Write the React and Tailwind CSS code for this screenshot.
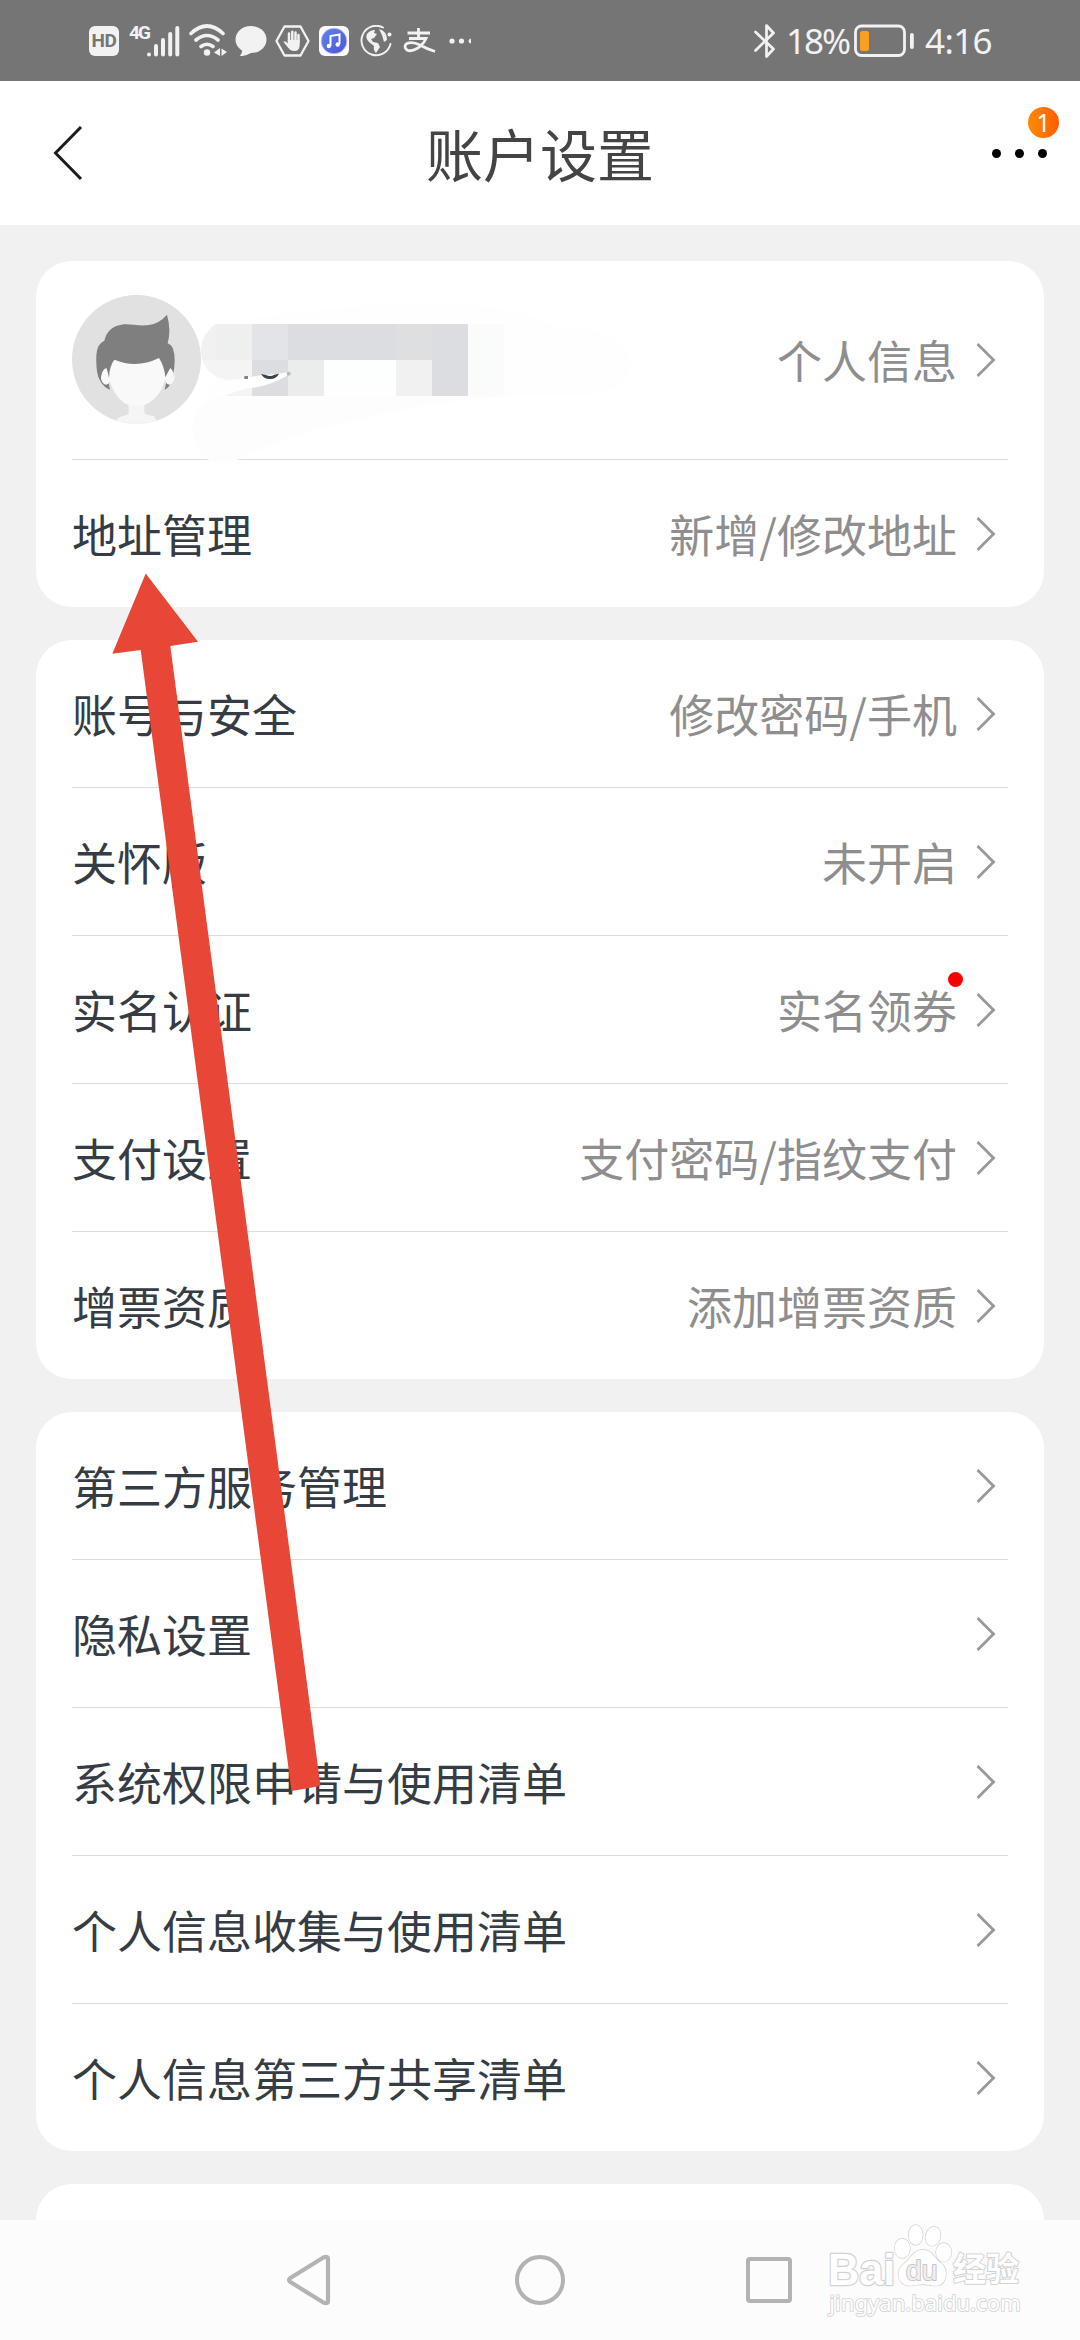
import React from "react";

const account = [
  { label: "账号与安全", value: "修改密码/手机" },
  { label: "关怀版", value: "未开启" },
  { label: "实名认证", value: "实名领券", dot: true },
  { label: "支付设置", value: "支付密码/指纹支付" },
  { label: "增票资质", value: "添加增票资质" },
];

const privacy = [
  { label: "第三方服务管理" },
  { label: "隐私设置" },
  { label: "系统权限申请与使用清单" },
  { label: "个人信息收集与使用清单" },
  { label: "个人信息第三方共享清单" },
];

function Chevron() {
  return (
    <svg className="ml-[19px] h-[36px] w-[20px] shrink-0" viewBox="0 0 20 36" fill="none">
      <path d="M1.500 2 17.500 18 1.500 34" stroke="#999" strokeWidth="2.800" />
    </svg>
  );
}

function Value({ value, dot }) {
  return (
    <div className="relative flex items-center text-[#8e8e8e]">
      <span>{value}</span>
      {dot && <i className="absolute -top-[5px] right-[33px] size-[15px] rounded-full bg-[#f90006]" />}
      <Chevron />
    </div>
  );
}

function Row({ label, value, dot }) {
  return (
    <div className="box-content flex h-[147px] items-center justify-between pr-[12px]">
      <span>{label}</span>
      <Value value={value} dot={dot} />
    </div>
  );
}

function Card({ children }) {
  return (
    <section className="mx-[36px] shrink-0 divide-y divide-[#dbdcdd] rounded-[36px] bg-white px-[36px]">
      {children}
    </section>
  );
}

function Avatar() {
  return (
    <svg className="-mt-[2px] size-[129px]" viewBox="36 45 387 387">
      <defs>
        <clipPath id="face"><circle cx="229.500" cy="238.500" r="193.500" /></clipPath>
      </defs>
      <g clipPath="url(#face)">
        <rect x="36" y="45" width="387" height="387" fill="#e2e1e2" />
        <path d="M112 270q4 45 38 60l-8-40zM342 270q0 42-28 60l8-40z" fill="#7f7f7f" />
        <path d="M206 350h47v50q8 7 30 8l12 30H165l8-24q15-6 33-11z" fill="#f5f5f5" />
        <ellipse cx="138" cy="287" rx="16" ry="27" fill="#f8f8f8" />
        <ellipse cx="328" cy="287" rx="16" ry="27" fill="#f8f8f8" />
        <path d="M160 225Q230 260 300 222L316 290Q308 345 262 371Q230 384 196 371Q158 347 147 292Z" fill="#f9f9f9" />
        <path d="M321 104Q296 133 262 136C225 138 208 130 184 134Q143 140 133 182Q112 190 109 225Q107 285 122 303Q124 268 139 264Q144 275 147 294Q148 258 163 239Q230 267 297 234Q314 260 316 292Q324 276 331 264Q344 276 338 292Q350 235 338 203Q333 194 323 190Q334 150 321 104Z" fill="#7f7f7f" />
      </g>
    </svg>
  );
}

/* Mosaic strokes that conceal the account name */
function NameMask() {
  return (
    <svg className="absolute left-[118px] top-[34px] h-[170px] w-[450px]" viewBox="390 45 1350 510">
      <defs>
        <clipPath id="brush">
          <path d="M468 132H1332V348H494Q540 325 590 322Q650 310 690 280Q610 285 560 293Q520 300 500 299Q445 290 426 240Q412 170 468 132Z" />
        </clipPath>
      </defs>
      <path d="M468 348Q390 380 398 460Q415 550 490 549Q530 548 590 512Q740 445 900 420Q1120 360 1332 352L1332 132H468Z" fill="#fdfdfd" />
      <path d="M468 132Q900 60 1200 76Q1380 80 1480 140Q1650 140 1705 220Q1730 320 1600 345Q1480 340 1332 350Z" fill="#fefefe" />
      <g clipPath="url(#brush)">
        <rect x="400" y="132" width="68" height="108" fill="#f1f1f1" />
        <rect x="468" y="132" width="108" height="108" fill="#eef0ef" />
        <rect x="400" y="240" width="176" height="108" fill="#f4f4f4" />
        <rect x="576" y="132" width="108" height="108" fill="#e3e4e7" />
        <rect x="576" y="240" width="108" height="108" fill="#dcdde0" />
        <rect x="684" y="132" width="324" height="108" fill="#dcdde0" />
        <rect x="1008" y="132" width="108" height="108" fill="#dedfe1" />
        <rect x="684" y="240" width="108" height="108" fill="#ebedec" />
        <rect x="792" y="240" width="216" height="108" fill="#fdfefe" />
        <rect x="1008" y="240" width="108" height="108" fill="#f1f1f2" />
        <rect x="1116" y="132" width="108" height="216" fill="#dcdde0" />
        <rect x="1224" y="132" width="108" height="216" fill="#fafbfb" />
      </g>
      <path d="M500 303Q560 293 605 286Q650 284 682 277Q692 280 670 293Q620 312 560 325Q515 338 492 349L430 348Q425 320 500 303Z" fill="#fefefe" />
      <path d="M603 282Q612 298 631 297Q650 296 657 281L643 284Q632 292 617 285Z" fill="#3a434b" />
      <rect x="553" y="288" width="11" height="9" fill="#7f8386" />
      <circle cx="686" cy="281" r="6" fill="#b9babc" />
    </svg>
  );
}

function StatusBar() {
  return (
    <div className="flex h-[81px] shrink-0 items-center bg-[#757575] pl-[89px] pr-[90px] text-[#f2f2f2]">
      <div className="flex size-[30px] items-center justify-center rounded-[6px] bg-[#f2f2f2] font-[Roboto] text-[19px] leading-none font-bold tracking-[-0.5px] text-[#757575]">HD</div>
      <span className="mb-[17px] ml-[10px] w-[18px] font-[Roboto] text-[19px] leading-none font-bold tracking-[-2px]">4G</span>
      <svg className="h-[32px] w-[34px]" viewBox="0 0 34 32" stroke="#f2f2f2" strokeWidth="4" strokeLinecap="round">
        <path d="M2 29.500V29.600M9 21V29.600M16 15V29.600M23.200 9V29.600M30.300 3V29.600" />
      </svg>
      <svg className="ml-[8px] h-[33px] w-[38px]" viewBox="0 0 38 33" fill="none" stroke="#f2f2f2" strokeWidth="3.600" strokeLinecap="round">
        <path d="M2 9.500Q18 -5.500 34 9.500M7 16Q18 7 29 16M12 22.500Q18 18 24 22.500" />
        <circle cx="18" cy="28.500" r="3.200" fill="#f2f2f2" stroke="none" />
        <path d="M31 24V32L25 28.500ZM32.500 24.500 38 28 32.500 32Z" fill="#f2f2f2" stroke="none" />
      </svg>
      <svg className="ml-[8px] h-[30px] w-[32px]" viewBox="0 0 32 30" fill="#f2f2f2">
        <path d="M16 0C25 0 31.500 6 31.500 13.500S25 27 16 27C12 29 8 30.500 5 30Q7.500 27 7 24.500C3 22 .5 18 .5 13.500C.5 6 7 0 16 0Z" />
      </svg>
      <svg className="ml-[8px] h-[32px] w-[35px]" viewBox="0 0 35 32" fill="none" stroke="#f2f2f2">
        <path d="M9.500 1.500H25.500L33.500 16 25.500 30.500H9.500L1.500 16Z" strokeWidth="2.300" strokeLinejoin="round" />
        <path d="M14 17V8.500M17.300 16V6.800M20.500 16V7.500M23.500 17V10" strokeWidth="2.500" strokeLinecap="round" />
        <path d="M12.800 15H24.700V20Q24.500 26 19.500 26Q15.500 26 13 22.500L8.500 17Q9.500 15 12.800 18.500Z" fill="#f2f2f2" stroke="none" />
      </svg>
      <svg className="ml-[9px] size-[30px]" viewBox="0 0 30 30">
        <defs>
          <linearGradient id="music" x1="0" y1="0" x2="1" y2="1"><stop stopColor="#5b87ec" /><stop offset="1" stopColor="#4c53d6" /></linearGradient>
        </defs>
        <rect width="30" height="30" rx="6" fill="#fafaff" />
        <circle cx="15" cy="15" r="12.800" fill="url(#music)" stroke="#d3b7fa" strokeWidth=".8" />
        <path d="M11.500 20V10L20.500 8.500V18" fill="none" stroke="#fff" strokeWidth="2" />
        <circle cx="9.800" cy="20" r="2.200" fill="#fff" /><circle cx="18.700" cy="18.500" r="2.200" fill="#fff" />
      </svg>
      <svg className="ml-[11px] size-[32px]" viewBox="0 0 32 32" fill="#f2f2f2">
        <path d="M23 2.500A14.700 14.700 0 1 0 30.500 19" fill="none" stroke="#f2f2f2" strokeWidth="1.900" strokeLinecap="round" />
        <path d="M7 9Q10 5 15 5L14 8 17 9 14 13 11 14 13 17 18 18 20 22 16 28Q13 25 14 21L9 17Q5 13 7 9ZM19 4Q27 6 27 15L24 17 22 10Z" />
        <circle cx="29.500" cy="9.500" r="2" />
      </svg>
      <svg className="ml-[11px] h-[26px] w-[33px]" viewBox="0 0 33 26" fill="none" stroke="#f2f2f2" strokeWidth="2.800">
        <path d="M4.500 5H27M15.500 0V10M6 10.500H23Q20 17 14 20.500Q8 24 4 22Q0 18 4 15.500Q9 13 17 17Q24 21 32 23.500" />
      </svg>
      <svg className="ml-[13px] h-[6px] w-[24px]" viewBox="0 0 24 6" fill="#f2f2f2">
        <circle cx="3" cy="3" r="2.600" /><circle cx="12.500" cy="3" r="2.600" /><path d="M22 .5V5.500Q19.500 5 19.500 3T22 .5Z" />
      </svg>
      <div className="flex-1" />
      <svg className="h-[34px] w-[22px]" viewBox="0 0 22 34" fill="none" stroke="#f2f2f2" strokeWidth="2.700" strokeLinejoin="round" strokeLinecap="round">
        <path d="M1.500 8 19.500 25 12.500 32.500V1.500L19.500 9 1.500 26.500" />
      </svg>
      <span className="ml-[10px] w-[68px] font-['Noto_Sans'] text-[35px] leading-none tracking-[-2px]">18%</span>
      <svg className="h-[34px] w-[62px]" viewBox="0 0 62 34">
        <rect x="1.500" y="2" width="49" height="29.500" rx="6" fill="none" stroke="#f2f2f2" strokeWidth="2.800" />
        <rect x="6" y="7" width="9" height="20" rx="2.500" fill="#fb9f20" />
        <rect x="56" y="9" width="3.800" height="16" rx="1.900" fill="#f2f2f2" />
      </svg>
      <span className="ml-[9px] w-[65px] font-['Noto_Sans'] text-[35px] leading-none tracking-[-0.6px] whitespace-nowrap">4:16</span>
    </div>
  );
}

function Header() {
  return (
    <header className="relative flex h-[144px] shrink-0 items-center justify-between bg-white pl-[53px] pr-[33px]">
      <svg className="h-[56px] w-[60px]" viewBox="0 0 60 56" fill="none">
        <path d="M28 2 2.500 28 28 54" stroke="#1c1c1c" strokeWidth="3" />
      </svg>
      <h1 className="absolute inset-x-0 top-[29px] text-center text-[57px] leading-[84px] text-[#444]">账户设置</h1>
      <div className="flex gap-[14px]">
        <i className="size-[9px] rounded-full bg-black" />
        <i className="size-[9px] rounded-full bg-black" />
        <i className="size-[9px] rounded-full bg-black" />
      </div>
      <span className="absolute right-[21px] top-[26px] flex size-[31px] items-center justify-center rounded-full bg-linear-to-r from-[#ff8a00] to-[#ff5c00] font-['Noto_Sans'] text-[25px] leading-none text-white">1</span>
    </header>
  );
}

function NavBar() {
  return (
    <nav className="flex h-[120px] shrink-0 items-center justify-between bg-[#fcfcfc] pl-[286px] pr-[288px]">
      <svg className="h-[52px] w-[45px]" viewBox="0 0 45 52" fill="none">
        <path d="M4 24.200 37 3.700Q42 1.500 42 5V47Q42 50.500 37 48.300L4 27.800Q2 26 4 24.200Z" stroke="#b3b3b3" strokeWidth="4.200" strokeLinejoin="round" />
      </svg>
      <i className="ml-[2px] size-[50px] rounded-full border-[4.500px] border-[#b3b3b3]" />
      <i className="size-[46px] rounded-[4px] border-[4.500px] border-[#b3b3b3]" />
    </nav>
  );
}

function Watermark() {
  return (
    <svg className="absolute bottom-[16px] right-[53px] h-[100px] w-[203px]" viewBox="191 282 609 300" fill="#fff" stroke="#d2d2d2" strokeWidth="4" strokeLinejoin="round">
      <g paintOrder="stroke">
        <text x="203" y="464" fontFamily="Liberation Sans" fontWeight="700" fontSize="132" textLength="202" lengthAdjust="spacingAndGlyphs" strokeWidth="7">Bai</text>
        <ellipse cx="426" cy="355" rx="23" ry="29" />
        <ellipse cx="466" cy="315" rx="21" ry="30" />
        <ellipse cx="518" cy="319" rx="22" ry="29" transform="rotate(15 518 319)" />
        <ellipse cx="550" cy="367" rx="23" ry="28" />
        <path d="M487 359C515 359 522 385 543 400C565 420 561 468 525 467C505 467 500 463 487 463S468 467 450 467C410 468 405 420 430 402C452 387 458 359 487 359Z" />
        <text x="437" y="449" fontFamily="Liberation Sans" fontSize="84" textLength="94" lengthAdjust="spacingAndGlyphs" fill="#f0f0f0" stroke="#c6c6c6" strokeWidth="6">du</text>
        <text x="578" y="454" fontFamily="Noto Sans CJK SC" fontWeight="700" fontSize="99" strokeWidth="6">经验</text>
        <text x="207" y="542" fontFamily="Noto Sans" fontSize="64" textLength="574" lengthAdjust="spacingAndGlyphs" strokeWidth="5">jingyan.baidu.com</text>
      </g>
    </svg>
  );
}

export default function App() {
  return (
    <div className="relative flex h-[2340px] w-[1080px] flex-col overflow-hidden bg-[#f1f1f1] font-['Noto_Sans_CJK_SC',sans-serif] text-[45px] leading-[66px] text-[#353c43]">
      <StatusBar />
      <Header />
      <main className="flex min-h-0 flex-1 flex-col gap-[33px] overflow-hidden pt-[36px]">
        <Card>
          <div className="relative box-content flex h-[198px] items-center justify-between pr-[12px]">
            <Avatar />
            <Value value="个人信息" />
            <NameMask />
          </div>
          <Row label="地址管理" value="新增/修改地址" />
        </Card>
        <Card>{account.map((item) => <Row key={item.label} {...item} />)}</Card>
        <Card>{privacy.map((item) => <Row key={item.label} {...item} />)}</Card>
        <Card><div className="h-[147px]" /></Card>
      </main>
      <NavBar />
      <svg className="absolute left-[100px] top-[560px] h-[1250px] w-[240px]" viewBox="100 560 240 1250">
        <path d="M145.700 573.500 198 641.700 170.300 646 320.500 1786 291.500 1791 140.700 650 112.300 653.700Z" fill="#e84637" />
      </svg>
      <Watermark />
    </div>
  );
}
